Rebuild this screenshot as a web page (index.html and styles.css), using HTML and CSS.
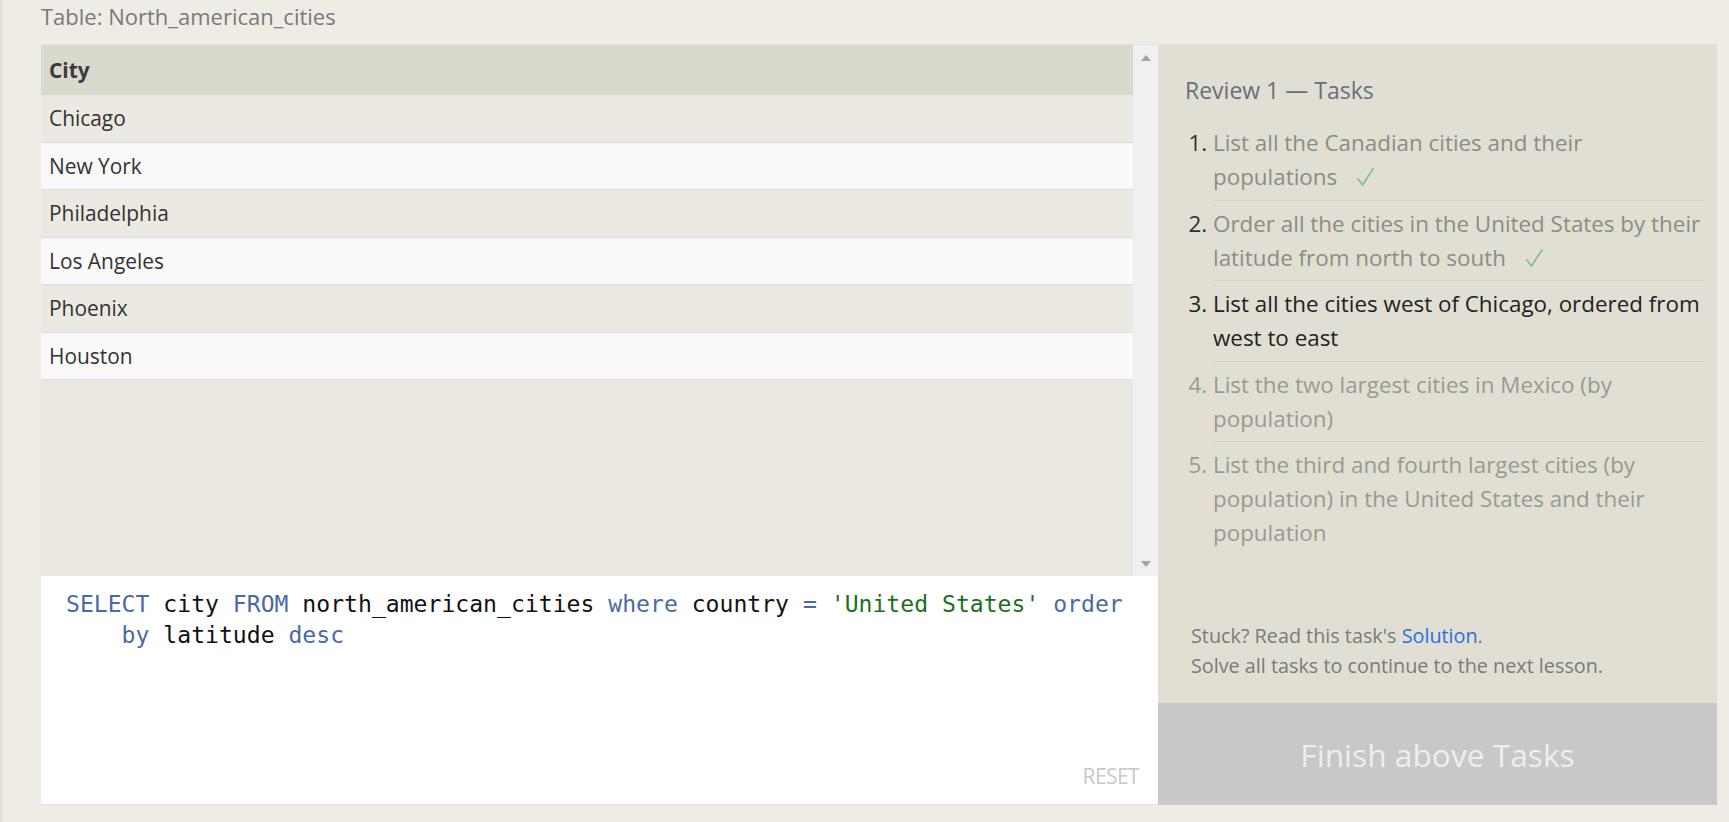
FILE: index.html
```html
<!DOCTYPE html>
<html>
<head>
<meta charset="utf-8">
<title>SQL Review</title>
<link rel="stylesheet" href="styles.css">
</head>
<body>
<div class="page">
  <div class="title">Table: North_american_cities</div>
  <div class="main">
    <div class="left">
      <div class="results">
        <div class="table-wrap">
          <table class="grid">
            <thead><tr><th>City</th></tr></thead>
            <tbody>
              <tr><td>Chicago</td></tr>
              <tr><td>New York</td></tr>
              <tr><td>Philadelphia</td></tr>
              <tr><td>Los Angeles</td></tr>
              <tr><td>Phoenix</td></tr>
              <tr><td>Houston</td></tr>
            </tbody>
          </table>
        </div>
        <div class="scrollbar">
          <span class="arrow up"></span>
          <span class="arrow down"></span>
        </div>
      </div>
      <div class="editor">
        <div class="code"><span class="kw">SELECT</span> city <span class="kw">FROM</span> north_american_cities <span class="kw">where</span> country <span class="kw">=</span> <span class="str">'United States'</span> <span class="kw">order</span> <span class="kw">by</span> latitude <span class="kw">desc</span></div>
        <div class="reset">RESET</div>
      </div>
    </div>
    <div class="panel">
      <div class="tasks">
        <h3 class="tasks-title">Review 1 — Tasks</h3>
        <ol class="task-list">
          <li class="done"><span class="txt">List all the Canadian cities and their populations</span><svg class="check" width="17" height="18" viewBox="0 0 17 18"><polyline points="1,11 5.5,17 16,1" fill="none" stroke="#80c880" stroke-width="1.8" stroke-linecap="round" stroke-linejoin="round"/></svg></li>
          <li class="done"><span class="txt">Order all the cities in the United States by their latitude from north to south</span><svg class="check" width="17" height="18" viewBox="0 0 17 18"><polyline points="1,11 5.5,17 16,1" fill="none" stroke="#80c880" stroke-width="1.8" stroke-linecap="round" stroke-linejoin="round"/></svg></li>
          <li class="current"><span class="txt">List all the cities west of Chicago, ordered from west to east</span></li>
          <li class="todo"><span class="txt">List the two largest cities in Mexico (by population)</span></li>
          <li class="todo"><span class="txt">List the third and fourth largest cities (by population) in the United States and their population</span></li>
        </ol>
      </div>
      <div class="help">
        <div>Stuck? Read this task's <a class="link" href="#">Solution</a>.</div>
        <div>Solve all tasks to continue to the next lesson.</div>
      </div>
      <div class="finish">Finish above Tasks</div>
    </div>
  </div>
</div>
</body>
</html>
```

FILE: styles.css
```css
html, body {
  margin: 0;
  padding: 0;
}

body {
  background: #efece5;
  font-family: "Open Sans", "Noto Sans", sans-serif;
  color: #333;
}

.page {
  border-left: 2px solid #e2dfd8;
  padding: 0 12px 17px 39px;
  height: 822px;
  box-sizing: border-box;
}

.title {
  height: 44px;
  line-height: 32px;
  font-size: 22px;
  color: #7a7a7a;
}

.main {
  display: flex;
  height: 761px;
}

.left {
  width: 1117px;
  display: flex;
  flex-direction: column;
}

.results {
  height: 532px;
  display: flex;
  border-top: 1px solid #e6e4dc;
  box-sizing: border-box;
}

.table-wrap {
  flex: 1;
  background: #eae8e0;
}

.grid {
  width: 100%;
  border-collapse: collapse;
  font-size: 20.9px;
}

.grid th {
  background: #dad9ce;
  text-align: left;
  font-weight: 700;
  height: 50px;
  padding: 0 0 0 8px;
  color: #3a3a3a;
}

.grid td {
  height: 46.5px;
  padding: 0 0 0 8px;
  border-bottom: 1px solid #dddcd6;
  color: #333;
}

.grid tbody tr:nth-child(odd) td {
  background: #ebe9e1;
}

.grid tbody tr:nth-child(even) td {
  background: #f9f9f9;
}

.scrollbar {
  width: 25px;
  background: #f0f0f0;
  display: flex;
  flex-direction: column;
  justify-content: space-between;
  align-items: center;
  padding: 10px 0 9px;
  box-sizing: border-box;
}

.arrow {
  width: 0;
  height: 0;
  border-left: 5.5px solid transparent;
  border-right: 5.5px solid transparent;
}

.arrow.up {
  border-bottom: 6px solid #a3a3a3;
}

.arrow.down {
  border-top: 6px solid #a3a3a3;
}

.editor {
  flex: 1;
  background: #ffffff;
  display: flex;
  flex-direction: column;
  border-bottom: 1px solid #e4e2dc;
}

.code {
  flex: 1;
  font-family: "DejaVu Sans Mono", monospace;
  font-size: 23.1px;
  line-height: 31px;
  padding: 13px 22px 0 calc(25px + 4ch);
  text-indent: -4ch;
  color: #111;
  white-space: pre-wrap;
}

.kw {
  color: #4b6aa8;
}

.str {
  color: #1d6f1d;
}

.reset {
  align-self: flex-end;
  margin: 0 19px 14px 0;
  font-size: 21px;
  color: #c9c9c9;
  letter-spacing: -0.6px;
}

.panel {
  width: 559px;
  background: #e1dfd4;
  display: flex;
  flex-direction: column;
}

.tasks {
  flex: 1;
  padding: 30px 12px 0 27px;
}

.tasks-title {
  margin: 0 0 14px;
  font-size: 23px;
  font-weight: 400;
  line-height: 32px;
  color: #66707c;
}

.task-list {
  margin: 0;
  padding: 0 0 0 28px;
  font-size: 22.4px;
  line-height: 34px;
}

.task-list li {
  padding: 6px 0 5.5px;
  border-bottom: 1px solid #d6d4c9;
}

.task-list li:last-child {
  border-bottom: none;
}

.task-list li.done {
  color: #2f2f2f;
}

.task-list li.done .txt {
  color: #8d8c86;
}

.task-list li.current {
  color: #222;
}

.task-list li.todo {
  color: #9a9992;
}

.check {
  margin-left: 20px;
  vertical-align: -1px;
}

.help {
  padding: 0 12px 22px 33px;
  font-size: 19.8px;
  line-height: 30px;
  color: #7a7a7a;
}

.link {
  color: #2a6fe0;
  text-decoration: none;
}

.finish {
  height: 102px;
  background: #c8c8c8;
  color: #eeeeee;
  font-size: 31.7px;
  display: flex;
  align-items: center;
  justify-content: center;
}
```
